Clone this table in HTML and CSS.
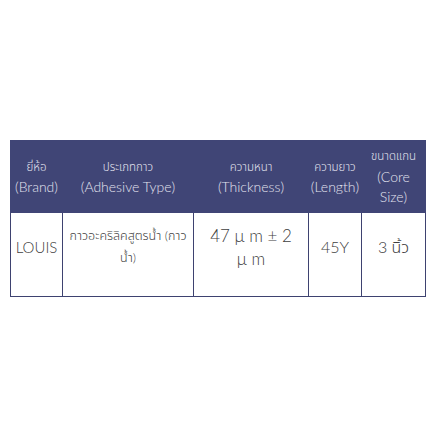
FILE: index.html
```html
<!DOCTYPE html>
<html lang="th">
<head>
<meta charset="utf-8">
<link rel="stylesheet" href="styles.css">
</head>
<body>
<div class="page">
  <table class="spec">
    <colgroup>
      <col class="c1"><col class="c2"><col class="c3"><col class="c4"><col class="c5">
    </colgroup>
    <thead>
      <tr>
        <th><span class="thai">ยี่ห้อ</span><br>(Brand)</th>
        <th><span class="thai">ประเภทกาว</span><br>(Adhesive Type)</th>
        <th><span class="thai">ความหนา</span><br>(Thickness)</th>
        <th><span class="thai">ความยาว</span><br>(Length)</th>
        <th><span class="thai">ขนาดแกน</span><br>(Core<br>Size)</th>
      </tr>
    </thead>
    <tbody>
      <tr>
        <td class="brand">LOUIS</td>
        <td class="adh">กาวอะคริลิคสูตรน้ำ (กาว<br>น้ำ)</td>
        <td class="thick">47 μ m ± 2<br>μ m</td>
        <td class="len">45Y</td>
        <td class="core">3 นิ้ว</td>
      </tr>
    </tbody>
  </table>
</div>
</body>
</html>
```
FILE: styles.css
```css
html, body {
  margin: 0;
  padding: 0;
  background: #ffffff;
}
.page {
  padding: 140px 10px 0 10px;
  font-family: "Lato", "Noto Sans Thai", "Loma", "Garuda", sans-serif;
  font-weight: 300;
}
.spec {
  border-collapse: collapse;
  width: 415px;
  table-layout: fixed;
}
.c1 { width: 52px; }
.c2 { width: 131px; }
.c3 { width: 115px; }
.c4 { width: 53px; }
.c5 { width: 64px; }
.spec th {
  background: #404576;
  color: #e2e3ef;
  font-weight: 300;
  font-size: 14px;
  line-height: 20.5px;
  height: 72px;
  padding: 0 1px;
  box-sizing: border-box;
  text-align: center;
  vertical-align: middle;
  border: 1px solid #404576;
}
.thai {
  font-size: 11.5px;
  white-space: nowrap;
}
.spec td {
  border: 1px solid #3e4270;
  color: #404040;
  text-align: center;
  vertical-align: middle;
  padding: 8px 2px 24px;
  height: 84px;
  box-sizing: border-box;
  font-size: 13px;
  line-height: 22px;
  font-weight: 300;
}
.spec .brand { font-size: 15px; }
.spec .adh { font-size: 12.5px; white-space: nowrap; }
.spec .thick { font-size: 17px; line-height: 23px; }
.spec .len { font-size: 16px; }
.spec .core { font-size: 16px; }
```
